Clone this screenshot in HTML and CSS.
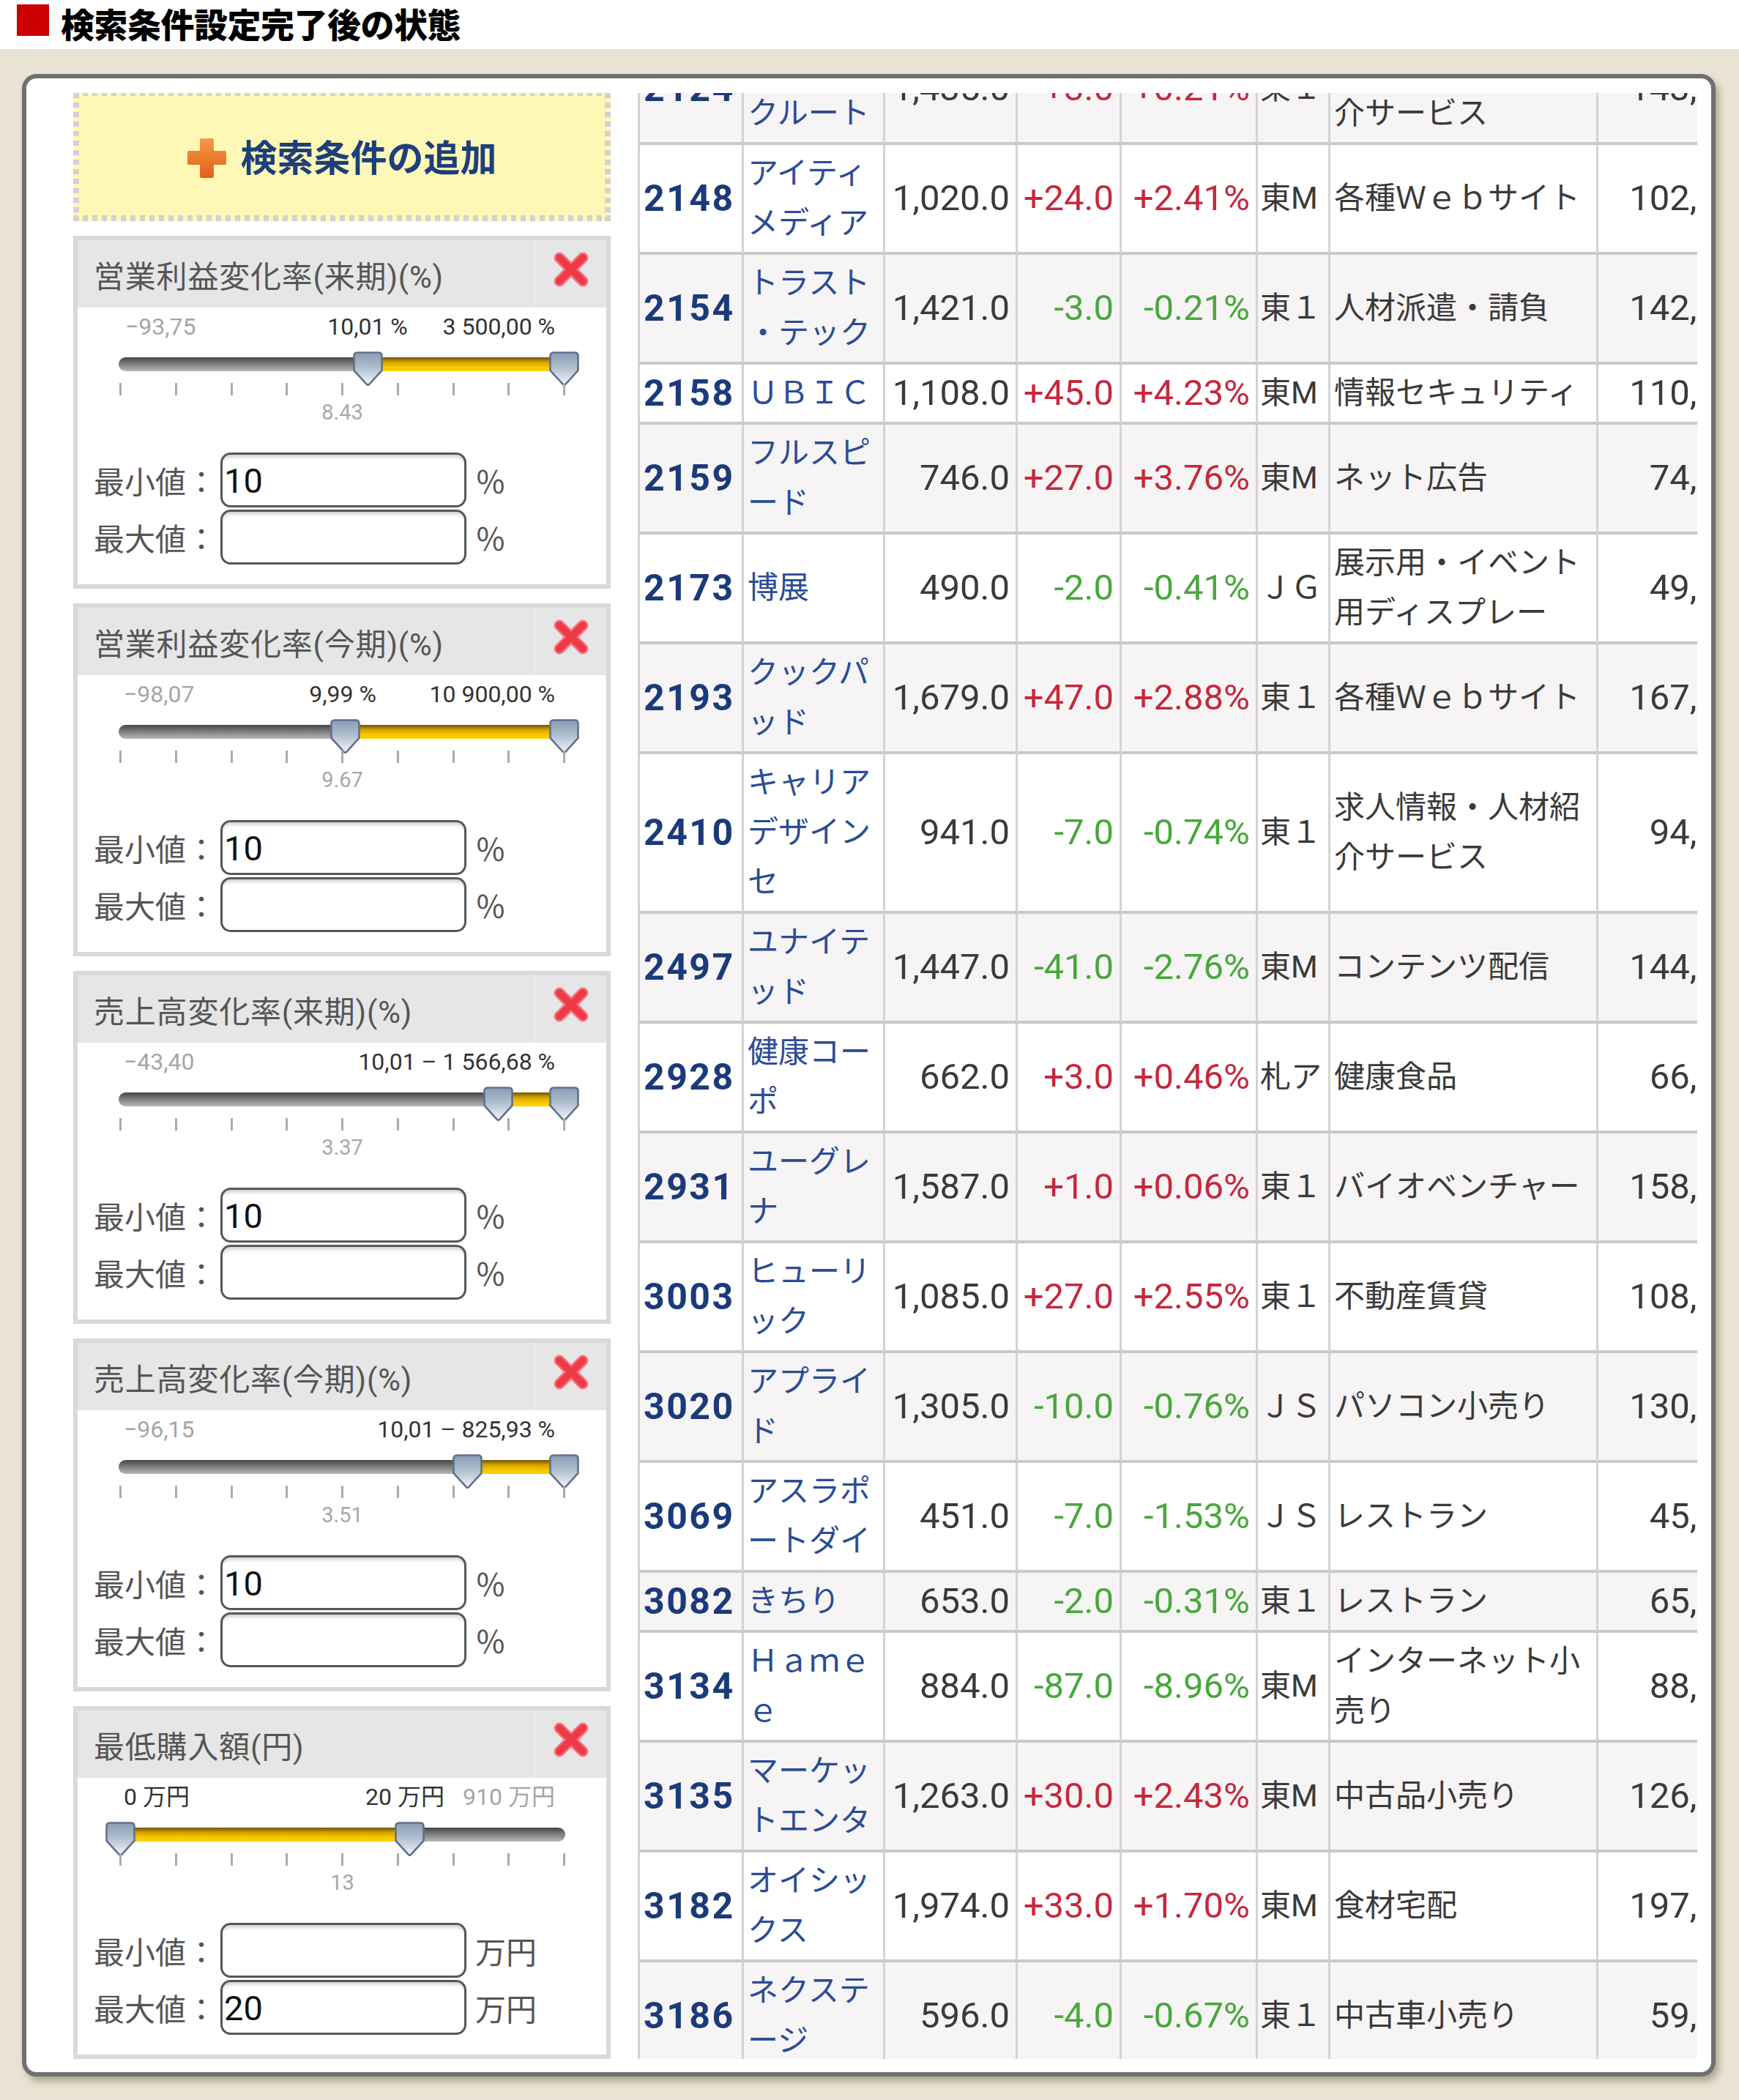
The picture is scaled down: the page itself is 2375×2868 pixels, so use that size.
FILE: index.html
```html
<!DOCTYPE html>
<html lang="ja">
<head>
<meta charset="utf-8">
<title>検索条件設定完了後の状態</title>
<link rel="stylesheet" href="styles.css">
</head>
<body>
<svg class="defs" width="0" height="0" aria-hidden="true">
  <defs>
    <linearGradient id="knobFill" x1="0" y1="0" x2="0" y2="1">
      <stop offset="0" stop-color="#8a9db3"/>
      <stop offset="0.45" stop-color="#aebdcc"/>
      <stop offset="1" stop-color="#f3f6f9"/>
    </linearGradient>
    <linearGradient id="plusFill" x1="0" y1="0" x2="0" y2="1">
      <stop offset="0" stop-color="#f49a48"/>
      <stop offset="1" stop-color="#e05f18"/>
    </linearGradient>
    <symbol id="knob" viewBox="0 0 41 48">
      <path d="M6 1.5 H35 Q39.5 1.5 39.5 6 V26 L22.2 44.8 Q20.5 46.6 18.8 44.8 L1.5 26 V6 Q1.5 1.5 6 1.5 Z" fill="url(#knobFill)" stroke="#5f728b" stroke-width="2.6"/>
    </symbol>
    <symbol id="close" viewBox="0 0 50 50">
      <path d="M9 9 L41 41 M41 9 L9 41" stroke="#f7757f" stroke-width="15" stroke-linecap="round"/>
      <path d="M9 9 L41 41 M41 9 L9 41" stroke="#ee3a48" stroke-width="10" stroke-linecap="round"/>
    </symbol>
  </defs>
</svg>

<header class="page-title">
  <span class="page-title-mark"></span>
  <h1 class="page-title-text">検索条件設定完了後の状態</h1>
</header>

<main class="frame">
  <aside class="side">
    <div class="add-box">
      <svg class="plus" width="53" height="54" viewBox="0 0 53 54">
        <path d="M17 2 Q17 0 19 0 H34 Q36 0 36 2 V17 H51 Q53 17 53 19 V34 Q53 36 51 36 H36 V52 Q36 54 34 54 H19 Q17 54 17 52 V36 H2 Q0 36 0 34 V19 Q0 17 2 17 H17 Z" fill="url(#plusFill)"/>
      </svg>
      <span class="add-text">検索条件の追加</span>
    </div>

    <section class="panel">
      <div class="panel-head">
        <div class="panel-title">営業利益変化率(来期)(%)</div>
        <div class="panel-close"><svg width="50" height="50"><use href="#close"/></svg></div>
      </div>
      <div class="slider">
        <span class="lbl dim" style="left:65px">−93,75</span>
        <span class="lbl on center" style="left:396px">10,01 %</span>
        <span class="lbl on end">3 500,00 %</span>
        <div class="track"></div>
        <div class="range" style="left:396px;width:268px"></div>
        <svg class="knob" style="left:376px"><use href="#knob"/></svg>
        <svg class="knob" style="left:644px"><use href="#knob"/></svg>
        <div class="scale">
          <div class="ticks"><i></i><i></i><i></i><i></i><i></i><i></i><i></i><i></i><i></i></div>
          <div class="mid">8.43</div>
        </div>
      </div>
      <div class="field-row"><span class="field-label">最小値：</span><input class="field-input" value="10" readonly><span class="field-unit">％</span></div>
      <div class="field-row"><span class="field-label">最大値：</span><input class="field-input" value="" readonly><span class="field-unit">％</span></div>
    </section>

    <section class="panel">
      <div class="panel-head">
        <div class="panel-title">営業利益変化率(今期)(%)</div>
        <div class="panel-close"><svg width="50" height="50"><use href="#close"/></svg></div>
      </div>
      <div class="slider">
        <span class="lbl dim" style="left:63px">−98,07</span>
        <span class="lbl on center" style="left:362px">9,99 %</span>
        <span class="lbl on end">10 900,00 %</span>
        <div class="track"></div>
        <div class="range" style="left:365px;width:299px"></div>
        <svg class="knob" style="left:345px"><use href="#knob"/></svg>
        <svg class="knob" style="left:644px"><use href="#knob"/></svg>
        <div class="scale">
          <div class="ticks"><i></i><i></i><i></i><i></i><i></i><i></i><i></i><i></i><i></i></div>
          <div class="mid">9.67</div>
        </div>
      </div>
      <div class="field-row"><span class="field-label">最小値：</span><input class="field-input" value="10" readonly><span class="field-unit">％</span></div>
      <div class="field-row"><span class="field-label">最大値：</span><input class="field-input" value="" readonly><span class="field-unit">％</span></div>
    </section>

    <section class="panel">
      <div class="panel-head">
        <div class="panel-title">売上高変化率(来期)(%)</div>
        <div class="panel-close"><svg width="50" height="50"><use href="#close"/></svg></div>
      </div>
      <div class="slider">
        <span class="lbl dim" style="left:63px">−43,40</span>
        <span class="lbl on end">10,01 – 1 566,68 %</span>
        <div class="track"></div>
        <div class="range" style="left:574px;width:90px"></div>
        <svg class="knob" style="left:554px"><use href="#knob"/></svg>
        <svg class="knob" style="left:644px"><use href="#knob"/></svg>
        <div class="scale">
          <div class="ticks"><i></i><i></i><i></i><i></i><i></i><i></i><i></i><i></i><i></i></div>
          <div class="mid">3.37</div>
        </div>
      </div>
      <div class="field-row"><span class="field-label">最小値：</span><input class="field-input" value="10" readonly><span class="field-unit">％</span></div>
      <div class="field-row"><span class="field-label">最大値：</span><input class="field-input" value="" readonly><span class="field-unit">％</span></div>
    </section>

    <section class="panel">
      <div class="panel-head">
        <div class="panel-title">売上高変化率(今期)(%)</div>
        <div class="panel-close"><svg width="50" height="50"><use href="#close"/></svg></div>
      </div>
      <div class="slider">
        <span class="lbl dim" style="left:63px">−96,15</span>
        <span class="lbl on end">10,01 – 825,93 %</span>
        <div class="track"></div>
        <div class="range" style="left:532px;width:132px"></div>
        <svg class="knob" style="left:512px"><use href="#knob"/></svg>
        <svg class="knob" style="left:644px"><use href="#knob"/></svg>
        <div class="scale">
          <div class="ticks"><i></i><i></i><i></i><i></i><i></i><i></i><i></i><i></i><i></i></div>
          <div class="mid">3.51</div>
        </div>
      </div>
      <div class="field-row"><span class="field-label">最小値：</span><input class="field-input" value="10" readonly><span class="field-unit">％</span></div>
      <div class="field-row"><span class="field-label">最大値：</span><input class="field-input" value="" readonly><span class="field-unit">％</span></div>
    </section>

    <section class="panel">
      <div class="panel-head">
        <div class="panel-title">最低購入額(円)</div>
        <div class="panel-close"><svg width="50" height="50"><use href="#close"/></svg></div>
      </div>
      <div class="slider">
        <span class="lbl on" style="left:63px">0 万円</span>
        <span class="lbl on center" style="left:447px">20 万円</span>
        <span class="lbl dim end">910 万円</span>
        <div class="track"></div>
        <div class="range" style="left:58px;width:395px"></div>
        <svg class="knob" style="left:38px"><use href="#knob"/></svg>
        <svg class="knob" style="left:433px"><use href="#knob"/></svg>
        <div class="scale">
          <div class="ticks"><i></i><i></i><i></i><i></i><i></i><i></i><i></i><i></i><i></i></div>
          <div class="mid">13</div>
        </div>
      </div>
      <div class="field-row"><span class="field-label">最小値：</span><input class="field-input" value="" readonly><span class="field-unit">万円</span></div>
      <div class="field-row"><span class="field-label">最大値：</span><input class="field-input" value="20" readonly><span class="field-unit">万円</span></div>
    </section>
  </aside>

  <div class="results">
    <table class="stocks">
      <colgroup>
        <col class="w-code"><col class="w-name"><col class="w-price"><col class="w-chg"><col class="w-pct"><col class="w-mkt"><col class="w-ind"><col class="w-amt">
      </colgroup>
      <tbody>
        <tr class="alt"><td class="code">2124</td><td class="name">ＪＡＣリクルート</td><td class="num">1,435.0</td><td class="num up">+3.0</td><td class="num up">+0.21%</td><td class="mkt">東１</td><td class="ind">求人情報・人材紹介サービス</td><td class="num">143,500</td></tr>
        <tr><td class="code">2148</td><td class="name">アイティメディア</td><td class="num">1,020.0</td><td class="num up">+24.0</td><td class="num up">+2.41%</td><td class="mkt">東M</td><td class="ind">各種Ｗｅｂサイト</td><td class="num">102,000</td></tr>
        <tr class="alt"><td class="code">2154</td><td class="name">トラスト・テック</td><td class="num">1,421.0</td><td class="num down">-3.0</td><td class="num down">-0.21%</td><td class="mkt">東１</td><td class="ind">人材派遣・請負</td><td class="num">142,100</td></tr>
        <tr><td class="code">2158</td><td class="name">ＵＢＩＣ</td><td class="num">1,108.0</td><td class="num up">+45.0</td><td class="num up">+4.23%</td><td class="mkt">東M</td><td class="ind">情報セキュリティ</td><td class="num">110,800</td></tr>
        <tr class="alt"><td class="code">2159</td><td class="name">フルスピード</td><td class="num">746.0</td><td class="num up">+27.0</td><td class="num up">+3.76%</td><td class="mkt">東M</td><td class="ind">ネット広告</td><td class="num">74,600</td></tr>
        <tr><td class="code">2173</td><td class="name">博展</td><td class="num">490.0</td><td class="num down">-2.0</td><td class="num down">-0.41%</td><td class="mkt">ＪＧ</td><td class="ind">展示用・イベント用ディスプレー</td><td class="num">49,000</td></tr>
        <tr class="alt"><td class="code">2193</td><td class="name">クックパッド</td><td class="num">1,679.0</td><td class="num up">+47.0</td><td class="num up">+2.88%</td><td class="mkt">東１</td><td class="ind">各種Ｗｅｂサイト</td><td class="num">167,900</td></tr>
        <tr><td class="code">2410</td><td class="name">キャリアデザインセ</td><td class="num">941.0</td><td class="num down">-7.0</td><td class="num down">-0.74%</td><td class="mkt">東１</td><td class="ind">求人情報・人材紹介サービス</td><td class="num">94,100</td></tr>
        <tr class="alt"><td class="code">2497</td><td class="name">ユナイテッド</td><td class="num">1,447.0</td><td class="num down">-41.0</td><td class="num down">-2.76%</td><td class="mkt">東M</td><td class="ind">コンテンツ配信</td><td class="num">144,700</td></tr>
        <tr><td class="code">2928</td><td class="name">健康コーポ</td><td class="num">662.0</td><td class="num up">+3.0</td><td class="num up">+0.46%</td><td class="mkt">札ア</td><td class="ind">健康食品</td><td class="num">66,200</td></tr>
        <tr class="alt"><td class="code">2931</td><td class="name">ユーグレナ</td><td class="num">1,587.0</td><td class="num up">+1.0</td><td class="num up">+0.06%</td><td class="mkt">東１</td><td class="ind">バイオベンチャー</td><td class="num">158,700</td></tr>
        <tr><td class="code">3003</td><td class="name">ヒューリック</td><td class="num">1,085.0</td><td class="num up">+27.0</td><td class="num up">+2.55%</td><td class="mkt">東１</td><td class="ind">不動産賃貸</td><td class="num">108,500</td></tr>
        <tr class="alt"><td class="code">3020</td><td class="name">アプライド</td><td class="num">1,305.0</td><td class="num down">-10.0</td><td class="num down">-0.76%</td><td class="mkt">ＪＳ</td><td class="ind">パソコン小売り</td><td class="num">130,500</td></tr>
        <tr><td class="code">3069</td><td class="name">アスラポートダイ</td><td class="num">451.0</td><td class="num down">-7.0</td><td class="num down">-1.53%</td><td class="mkt">ＪＳ</td><td class="ind">レストラン</td><td class="num">45,100</td></tr>
        <tr class="alt"><td class="code">3082</td><td class="name">きちり</td><td class="num">653.0</td><td class="num down">-2.0</td><td class="num down">-0.31%</td><td class="mkt">東１</td><td class="ind">レストラン</td><td class="num">65,300</td></tr>
        <tr><td class="code">3134</td><td class="name">Ｈａｍｅｅ</td><td class="num">884.0</td><td class="num down">-87.0</td><td class="num down">-8.96%</td><td class="mkt">東M</td><td class="ind">インターネット小売り</td><td class="num">88,400</td></tr>
        <tr class="alt"><td class="code">3135</td><td class="name">マーケットエンタ</td><td class="num">1,263.0</td><td class="num up">+30.0</td><td class="num up">+2.43%</td><td class="mkt">東M</td><td class="ind">中古品小売り</td><td class="num">126,300</td></tr>
        <tr><td class="code">3182</td><td class="name">オイシックス</td><td class="num">1,974.0</td><td class="num up">+33.0</td><td class="num up">+1.70%</td><td class="mkt">東M</td><td class="ind">食材宅配</td><td class="num">197,400</td></tr>
        <tr class="alt"><td class="code">3186</td><td class="name">ネクステージ</td><td class="num">596.0</td><td class="num down">-4.0</td><td class="num down">-0.67%</td><td class="mkt">東１</td><td class="ind">中古車小売り</td><td class="num">59,600</td></tr>
      </tbody>
    </table>
  </div>
</main>
</body>
</html>
```

FILE: styles.css
```css
* { box-sizing: border-box; }

html, body { margin: 0; padding: 0; }

body {
  background: #e9e3d3;
  font-family: Roboto, "Noto Sans CJK JP", sans-serif;
  min-height: 2868px;
}

.defs { position: absolute; width: 0; height: 0; overflow: hidden; }

/* ---------- page title ---------- */
.page-title {
  background: #fff;
  height: 67px;
  display: flex;
  align-items: flex-start;
  gap: 16px;
  padding: 0 0 0 23px;
}
.page-title-mark {
  flex: none;
  width: 44px;
  height: 43px;
  margin-top: 6px;
  background: #cc0000;
}
.page-title-text {
  margin: 0;
  font-family: "Noto Sans CJK JP", sans-serif;
  font-weight: 900;
  font-size: 46px;
  line-height: 62px;
  color: #000;
  letter-spacing: -0.5px;
}

/* ---------- outer frame ---------- */
.frame {
  margin: 34px 0 0 30px;
  width: 2313px;
  border: 6px solid #707070;
  border-radius: 20px;
  background: #fff;
  box-shadow: 5px 7px 10px rgba(70, 60, 35, 0.35);
  display: flex;
  gap: 37px;
  padding: 20px 19px 18px 64px;
}

.side {
  flex: none;
  width: 734px;
  display: flex;
  flex-direction: column;
  gap: 20px;
}

/* ---------- add box ---------- */
.add-box {
  height: 175px;
  display: flex;
  align-items: center;
  justify-content: center;
  gap: 20px;
  padding-bottom: 6px;
  background:
    repeating-linear-gradient(to right, #d7ced6 0 7px, transparent 7px 13px) left top / 100% 4px no-repeat,
    repeating-linear-gradient(to right, #d7ced6 0 7px, transparent 7px 13px) left bottom / 100% 8px no-repeat,
    repeating-linear-gradient(to bottom, #d7ced6 0 7px, transparent 7px 13px) left top / 8px 100% no-repeat,
    repeating-linear-gradient(to bottom, #d7ced6 0 7px, transparent 7px 13px) right top / 8px 100% no-repeat,
    #fef8b6;
}
.plus { flex: none; margin-top: 8px; }
.add-text {
  font-family: "Noto Sans CJK JP", sans-serif;
  font-weight: 700;
  font-size: 50px;
  line-height: 1;
  color: #1d3f7a;
}

/* ---------- filter panels ---------- */
.panel {
  border: 6px solid #dcd8d8;
  background: #fff;
  padding-bottom: 27px;
}
.panel-head {
  height: 92px;
  display: flex;
  background: #e6e6e6;
}
.panel-title {
  flex: 1;
  display: flex;
  align-items: center;
  padding: 0 0 0 22px;
  font-size: 42px;
  letter-spacing: 0.8px;
  color: #555;
  white-space: nowrap;
}
.panel-close {
  flex: none;
  width: 98px;
  border-left: 2px solid #ececec;
  display: flex;
  align-items: center;
  justify-content: center;
  padding-bottom: 12px;
}

.slider {
  position: relative;
  height: 198px;
}
.lbl {
  position: absolute;
  top: 10px;
  font-size: 32px;
  line-height: 1;
  white-space: nowrap;
}
.lbl.dim { color: #a6a6a6; }
.lbl.on { color: #333; }
.lbl.center { transform: translateX(-50%); }
.lbl.end { left: auto; right: 70px; }

.track {
  position: absolute;
  left: 56px;
  width: 610px;
  top: 68px;
  height: 19px;
  border-radius: 10px;
  background: linear-gradient(#454545, #7b7b7b 45%, #b7b7b7);
}
.range {
  position: absolute;
  top: 68px;
  height: 19px;
  background: linear-gradient(#6e5300, #d4a200 35%, #f6c600 70%, #ffd300);
}
.knob {
  position: absolute;
  top: 60px;
  width: 41px;
  height: 48px;
  overflow: visible;
}
.scale {
  position: absolute;
  left: 57px;
  width: 609px;
  top: 103px;
}
.ticks {
  display: flex;
  justify-content: space-between;
  height: 17px;
}
.ticks i {
  display: block;
  width: 3px;
  height: 17px;
  background: #ababab;
}
.mid {
  margin-top: 9px;
  text-align: center;
  font-size: 29px;
  line-height: 1;
  color: #a8a8a8;
}

.field-row {
  display: flex;
  align-items: center;
  height: 75px;
}
.field-row + .field-row { margin-top: 3px; }
.field-label {
  flex: none;
  width: 195px;
  padding-left: 22px;
  font-size: 42px;
  color: #555;
  white-space: nowrap;
}
.field-input {
  flex: none;
  width: 336px;
  height: 75px;
  margin: 0;
  border: 3px solid #575757;
  border-radius: 14px;
  background: #fff;
  box-shadow: inset 0 6px 5px -3px rgba(0, 0, 0, 0.2);
  padding: 2px 2px 0;
  font-family: Roboto, sans-serif;
  font-size: 47px;
  color: #111;
  outline: none;
}
.field-unit {
  margin-left: 12px;
  font-size: 42px;
  color: #555;
}

/* ---------- results table ---------- */
.results {
  flex: none;
  width: 1447px;
  contain: size;
  overflow: hidden;
}
.stocks {
  width: 1540px;
  table-layout: fixed;
  border-collapse: separate;
  border-spacing: 0;
  margin-top: -79px;
}
.w-code { width: 145px; }
.w-name { width: 193px; }
.w-price { width: 181px; }
.w-chg { width: 142px; }
.w-pct { width: 186px; }
.w-mkt { width: 99px; }
.w-ind { width: 366px; }
.w-amt { width: 228px; }

.stocks td {
  padding: 5px 7px 5px 5px;
  border-right: 3px solid #d3d3d3;
  border-bottom: 4px solid #c9c9c9;
  vertical-align: middle;
  line-height: 68px;
  font-size: 42px;
  color: #3a3a3a;
  background: #fff;
}
.stocks td:first-child { border-left: 3px solid #d3d3d3; }
.stocks tr.alt td { background: #f6f4f4; }

.stocks td.code {
  font-size: 50px;
  font-weight: 700;
  letter-spacing: 2.5px;
  color: #1b3a7a;
  white-space: nowrap;
}
.stocks td.name {
  color: #2b4c95;
  line-break: anywhere;
  word-break: break-all;
}
.stocks td.num {
  text-align: right;
  font-size: 49px;
  white-space: nowrap;
  padding-right: 8px;
}
.stocks td.up { color: #c5283d; }
.stocks td.down { color: #47a83b; }
.stocks td.mkt {
  padding-left: 3px;
  padding-right: 2px;
  white-space: nowrap;
}
.stocks td.ind {
  line-break: anywhere;
  word-break: break-all;
}
```
